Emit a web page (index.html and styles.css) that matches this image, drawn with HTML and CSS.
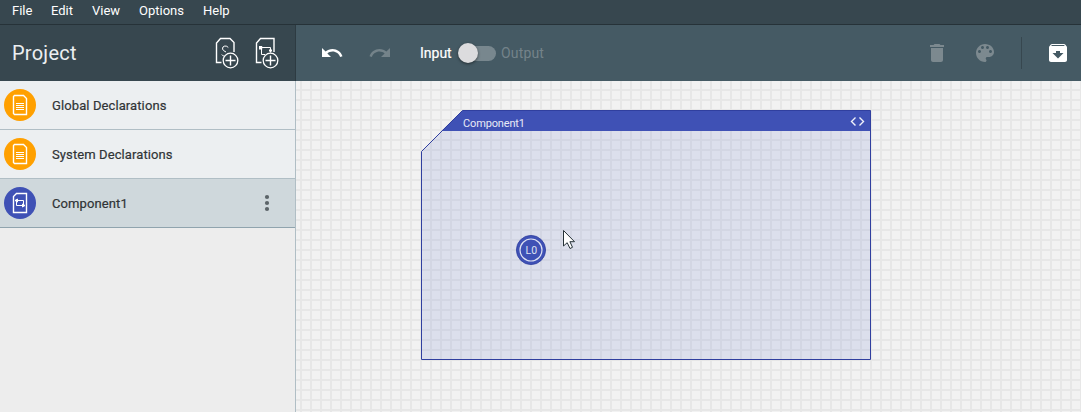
FILE: index.html
```html
<!DOCTYPE html>
<html lang="en">
<head>
<meta charset="utf-8">
<title>Project</title>
<link rel="stylesheet" href="styles.css">
</head>
<body>
<nav class="menubar"><span class="m-file">File</span><span class="m-edit">Edit</span><span class="m-view">View</span><span class="m-options">Options</span><span>Help</span></nav>
<div class="app">
  <aside class="sidebar">
    <header class="side-head">
      <h1>Project</h1>
      <svg class="add" width="26" height="32" viewBox="0 0 26 32">
        <path d="M7.500 25.500H2.500V6L6.500 1.500H16L20 5.500V15" class="line2"/>
        <path d="M14.300 10.500Q13 8.800 10.800 9Q8.200 9.500 8.500 12Q9 13.800 12 15M7.800 17.500Q9 19.500 11 19.200" class="line"/>
        <circle cx="16.500" cy="23.500" r="7.300" class="line plate"/><path d="M16.500 18.500V28.500M11.500 23.500H21.500" class="line2"/>
      </svg>
      <svg class="add" width="26" height="32" viewBox="0 0 26 32">
        <path d="M7.500 25.500H2.500V6L6.500 1.500H20V15" class="line2"/>
        <path d="M5 10.500H16.500V15.500M7.500 10.500V17.500H11" class="line"/><path d="M5 9h3.200v3.500H5zM15 12.500h3v2h-3z" fill="#fff"/>
        <circle cx="16.500" cy="23.500" r="7.300" class="line plate"/><path d="M16.500 18.500V28.500M11.500 23.500H21.500" class="line2"/>
      </svg>
    </header>
    <div class="item">
      <svg class="badge" width="32" height="32" viewBox="0 0 32 32"><circle cx="16" cy="16" r="16" fill="#ffa000"/><path d="M10.500 6.500H19.500L22.500 9.500V25.500H10.500L9.500 24.500V7.500Z" class="line2"/><path d="M12 14.500H20M12 16.500H20M12 18.500H20M12 20.500H20" class="line"/></svg>
      <span>Global Declarations</span>
    </div>
    <div class="item">
      <svg class="badge" width="32" height="32" viewBox="0 0 32 32"><circle cx="16" cy="16" r="16" fill="#ffa000"/><path d="M10.500 6.500H19.500L22.500 9.500V25.500H10.500L9.500 24.500V7.500Z" class="line2"/><path d="M12 14.500H20M12 16.500H20M12 18.500H20M12 20.500H20" class="line"/></svg>
      <span>System Declarations</span>
    </div>
    <div class="item selected">
      <svg class="badge" width="32" height="32" viewBox="0 0 32 32"><circle cx="16" cy="16" r="16" fill="#3f51b5"/><path d="M12.500 6.500H22.500V25.500H9.500V9.500Z" class="line2"/><path d="M11 13.500H19.500V18.500M12.500 13.500V18.500H20.500" class="line"/><path d="M11 13.500l2.500-1.500v3zM21 18.500l-2.500-1.500v3z" class="line"/></svg>
      <span>Component1</span>
      <svg class="more" width="6" height="18" viewBox="0 0 6 18" fill="#5b6468"><circle cx="3" cy="3" r="2.100"/><circle cx="3" cy="9" r="2.100"/><circle cx="3" cy="15" r="2.100"/></svg>
    </div>
  </aside>
  <main class="main">
    <div class="toolbar">
      <svg class="undo" width="24" height="24" viewBox="0 0 24 24" fill="#fff"><path d="M12.500 8c-2.650 0-5.050.99-6.900 2.600L2 7v9h9l-3.620-3.620c1.390-1.160 3.160-1.880 5.120-1.880 3.540 0 6.550 2.310 7.600 5.500l2.370-.78C21.080 11.030 17.150 8 12.500 8z"/></svg>
      <svg class="redo" width="24" height="24" viewBox="0 0 24 24" fill="#74838a"><path d="M18.400 10.600C16.550 8.990 14.150 8 11.500 8c-4.650 0-8.580 3.030-9.960 7.220L3.900 16c1.050-3.190 4.050-5.500 7.600-5.500 1.950 0 3.730.72 5.120 1.880L13 16h9V7l-3.600 3.600z"/></svg>
      <span class="input-label">Input</span>
      <span class="toggle"><span class="knob"></span></span>
      <span class="output-label">Output</span>
      <div class="actions">
        <svg width="24" height="24" viewBox="0 0 24 24" fill="#7c898f"><path d="M6 19c0 1.100.9 2 2 2h8c1.100 0 2-.9 2-2V7H6v12zM19 4h-3.500l-1-1h-5l-1 1H5v2h14V4z"/></svg>
        <svg width="24" height="24" viewBox="0 0 24 24" fill="#7c898f"><path d="M12 3c-4.970 0-9 4.030-9 9s4.030 9 9 9c.83 0 1.500-.67 1.500-1.500 0-.39-.15-.74-.39-1.010-.23-.26-.38-.61-.38-.99 0-.83.67-1.500 1.500-1.500H16c2.760 0 5-2.240 5-5 0-4.420-4.030-8-9-8zm-5.500 9c-.83 0-1.500-.67-1.500-1.500S5.670 9 6.500 9 8 9.670 8 10.500 7.330 12 6.500 12zm3-4C8.670 8 8 7.330 8 6.500S8.670 5 9.500 5s1.500.67 1.500 1.500S10.330 8 9.500 8zm5 0c-.83 0-1.500-.67-1.500-1.500S13.670 5 14.500 5s1.500.67 1.500 1.500S15.330 8 14.500 8zm3 4c-.83 0-1.500-.67-1.500-1.500S16.670 9 17.500 9s1.500.67 1.500 1.500-.67 1.500-1.500 1.500z"/></svg>
        <span class="divider"></span>
        <svg width="24" height="24" viewBox="0 0 24 24" fill="#fff"><path d="M20.540 5.230l-1.390-1.680C18.880 3.210 18.470 3 18 3H6c-.47 0-.88.21-1.160.55L3.460 5.230C3.170 5.570 3 6.020 3 6.500V19c0 1.100.9 2 2 2h14c1.100 0 2-.9 2-2V6.500c0-.48-.17-.93-.46-1.270zM12 17.500L6.500 12H10v-2h4v2h3.500L12 17.500zM5.120 5l.81-1h12l.94 1H5.120z"/></svg>
      </div>
    </div>
    <div class="canvas">
      <svg class="diagram" width="785" height="331" viewBox="296 81 785 331">
        <path d="M421.500 151.500L462.500 110.500H870.500V359.500H421.500Z" fill="#435bc4" fill-opacity=".12"/>
        <path d="M441.500 131L462.500 110.500H870.500V131Z" fill="#3f51b5"/>
        <path d="M421.500 151.500L462.500 110.500H870.500V359.500H421.500Z" fill="none" stroke="#303f9f"/>
        <text x="463" y="127" class="title" textLength="62">Component1</text>
        <path d="M855.500 117.500L851.500 121.500L855.500 125.500M859.500 117.500L863.500 121.500L859.500 125.500" fill="none" stroke="#f0f1fa" stroke-width="1.400"/>
        <circle cx="531" cy="250" r="14.600" fill="#3f51b5" stroke="#303f9f" stroke-width=".8"/>
        <circle cx="531" cy="250" r="11" fill="none" stroke="#dfe2f2" stroke-width="1.200"/>
        <text x="531.300" y="254" class="node">L0</text>
        <path d="M563.500 230.500V246L567.200 242.700L570 248.500L572.500 247.300L569.900 241.700H574.500Z" fill="#fff" stroke="#263238"/>
      </svg>
    </div>
  </main>
</div>
</body>
</html>
```
FILE: styles.css
```css
* { box-sizing: border-box; }
body { margin: 0; width: 1081px; height: 412px; overflow: hidden; display: flex; flex-direction: column; font-family: Roboto, sans-serif; }
svg { display: block; flex: none; }
.menubar { height: 25px; flex: none; display: flex; padding-left: 12px; background: #37474f; border-bottom: 1px solid #263238; color: #fff; font-size: 13px; line-height: 22px; }
.m-file { width: 39px; }
.m-edit { width: 41px; }
.m-view { width: 47px; }
.m-options { width: 64px; }
.app { flex: 1; display: flex; min-height: 0; }
.sidebar { width: 296px; flex: none; background: #ededed; border-right: 1px solid #b0bec5; }
.side-head { height: 56px; margin-right: -1px; border-right: 1px solid #2d3b42; display: flex; align-items: center; padding: 0 15px 0 12px; background: #37474f; color: #eceff1; }
h1 { margin: 0 auto 0 0; font-size: 20px; font-weight: 400; line-height: 24px; letter-spacing: .25px; }
.add { margin-left: 14px; }
.line { fill: none; stroke: #fff; stroke-width: 1; }
.line2 { fill: none; stroke: #fff; stroke-width: 1.4; }
.line.plate { fill: #37474f; stroke-width: 1.3; }
.item { height: 49px; display: flex; align-items: center; padding-left: 4px; background: #eceff1; border-bottom: 1px solid #b0bec5; color: #303436; font-size: 13px; }
.item span { margin-left: 16px; letter-spacing: .1px; -webkit-text-stroke: .2px #303436; }
.selected { background: #cfd8dc; border-bottom-color: #90a4ae; }
.more { margin-left: auto; margin-right: 25px; }
.main { flex: 1; display: flex; flex-direction: column; min-width: 0; }
.toolbar { height: 56px; flex: none; display: flex; align-items: center; padding-left: 24px; background: #455a64; font-size: 14px; }
.redo { margin-left: 24px; }
.input-label { margin-left: 28px; width: 38px; color: #fff; -webkit-text-stroke: .2px #fff; }
.toggle { width: 36px; height: 15px; border-radius: 8px; background: #78878e; display: flex; align-items: center; margin-top: 1px; margin-left: 2px; }
.knob { width: 20px; height: 20px; flex: none; border-radius: 50%; background: #dcdcde; box-shadow: 0 1px 3px rgba(0,0,0,.5); margin-left: -2px; margin-top: -1px; }
.output-label { margin-left: 5px; color: #74838a; letter-spacing: .15px; }
.actions { margin-left: auto; display: flex; align-items: center; gap: 24px; padding-right: 11px; }
.divider { width: 1px; height: 32px; background: #37474f; }
.canvas { flex: 1; background-color: #f2f2f2; background-image: linear-gradient(90deg, #e7e7e7 2px, transparent 2px), linear-gradient(#e7e7e7 2px, transparent 2px); background-size: 10px 10px; background-position: 4px 8px; }
.title { fill: #e8eaf6; font-size: 11px; }
.node { fill: #dfe2f2; font-size: 10.5px; text-anchor: middle; }
```
